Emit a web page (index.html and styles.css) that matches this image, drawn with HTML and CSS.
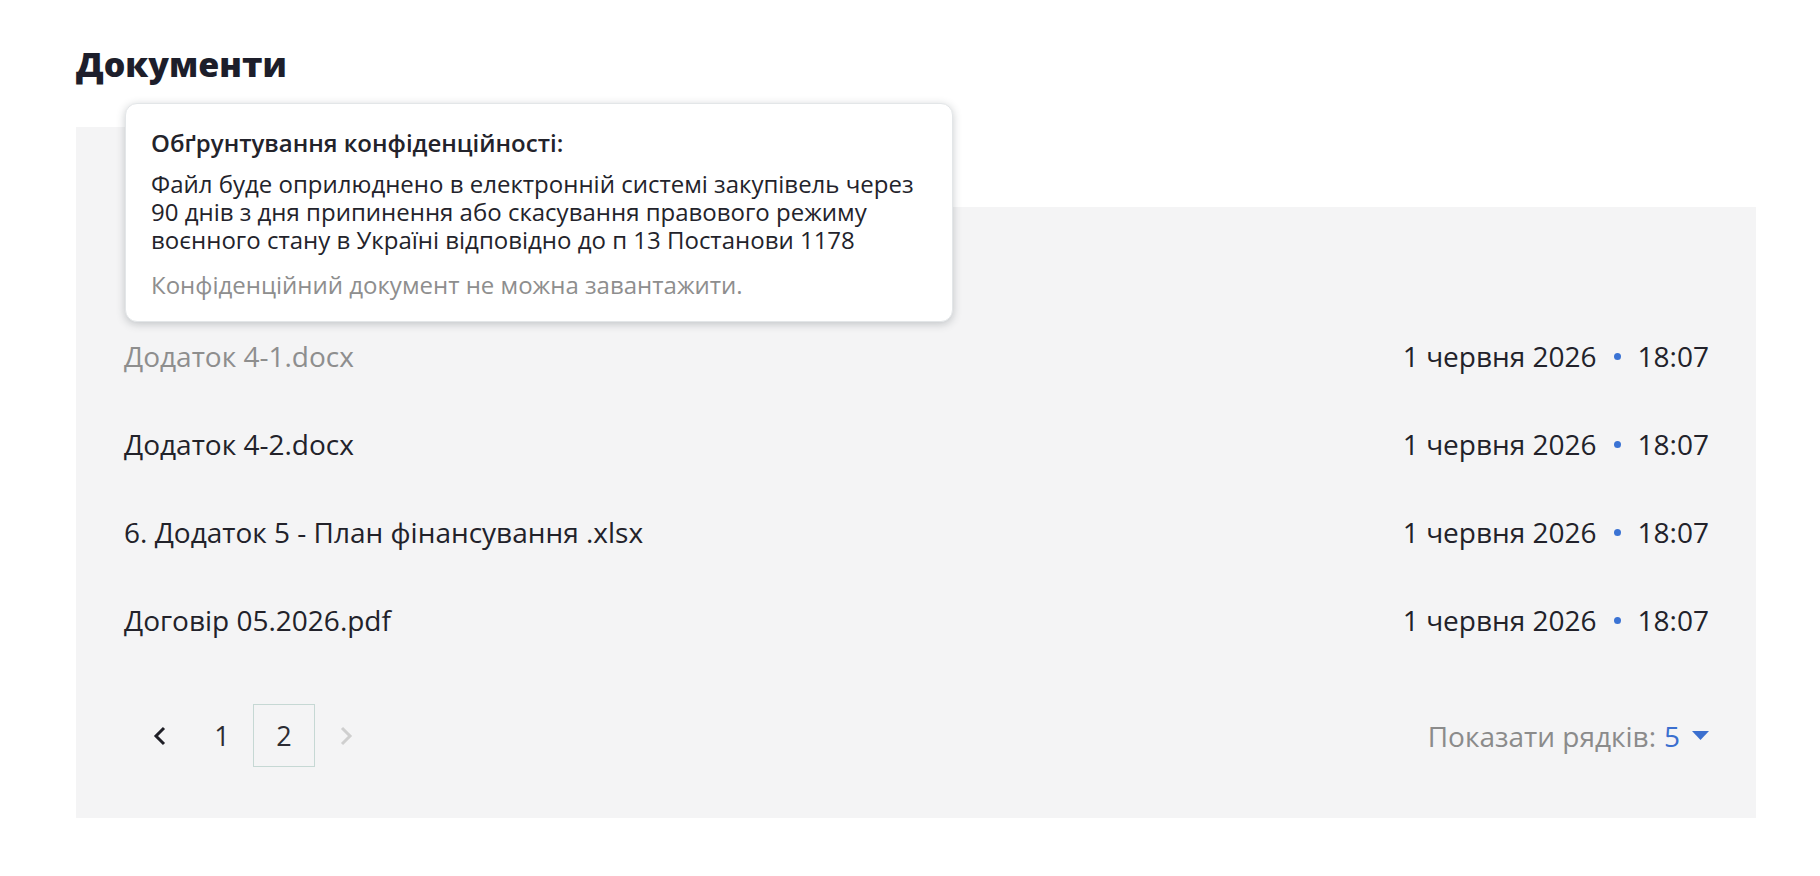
FILE: index.html
```html
<!DOCTYPE html>
<html lang="uk">
<head>
<meta charset="utf-8">
<title>Документи</title>
<link rel="stylesheet" href="styles.css">
</head>
<body>
<main class="page">
  <h1 class="title">Документи</h1>
  <section class="docs">
    <div class="docs-top"><div class="docs-top-fill"></div></div>
    <div class="docs-body">
      <ul class="doc-list">
        <li class="doc-row"><span class="doc-name doc-name--locked">Додаток 4-1.docx</span><span class="doc-date">1 червня 2026<i class="dot"></i>18:07</span></li>
        <li class="doc-row"><span class="doc-name">Додаток 4-2.docx</span><span class="doc-date">1 червня 2026<i class="dot"></i>18:07</span></li>
        <li class="doc-row"><span class="doc-name">6. Додаток 5 - План фінансування .xlsx</span><span class="doc-date">1 червня 2026<i class="dot"></i>18:07</span></li>
        <li class="doc-row"><span class="doc-name">Договір 05.2026.pdf</span><span class="doc-date">1 червня 2026<i class="dot"></i>18:07</span></li>
      </ul>
      <div class="pager-row">
        <nav class="pager">
          <span class="pg pg-prev"><svg width="14" height="20" viewBox="0 0 14 20"><path d="M11 2 L3 10 L11 18" fill="none" stroke="currentColor" stroke-width="3"/></svg></span>
          <span class="pg">1</span>
          <span class="pg pg-current">2</span>
          <span class="pg pg-next"><svg width="14" height="20" viewBox="0 0 14 20"><path d="M3 2 L11 10 L3 18" fill="none" stroke="currentColor" stroke-width="3"/></svg></span>
        </nav>
        <div class="rows">Показати рядків: <span class="rows-val">5</span><svg class="caret" width="17" height="9" viewBox="0 0 17 9"><path d="M0 0 H17 L8.5 9 Z" fill="currentColor"/></svg></div>
      </div>
    </div>
    <div class="tooltip">
      <div class="tt-title">Обґрунтування конфіденційності:</div>
      <p class="tt-text">Файл буде оприлюднено в електронній системі закупівель через 90 днів з дня припинення або скасування правового режиму воєнного стану в Україні відповідно до п 13 Постанови 1178</p>
      <p class="tt-note">Конфіденційний документ не можна завантажити.</p>
    </div>
  </section>
</main>
</body>
</html>
```

FILE: styles.css
```css
* { box-sizing: border-box; }
html, body { margin: 0; background: #ffffff; }
body {
  font-family: "Open Sans", "Noto Sans", sans-serif;
  color: #23232b;
}
.page {
  width: 1820px;
  padding: 44px 64px 0 76px;
}
.title {
  margin: 0 0 43px;
  font-size: 34px;
  line-height: 40px;
  font-weight: 800;
  color: #1d1e2b;
}
.docs {
  position: relative;
  width: 1680px;
}
.docs-top {
  height: 80px;
  display: flex;
}
.docs-top-fill {
  width: 860px;
  background: #f4f4f5;
}
.docs-body {
  background: #f4f4f5;
  padding: 105px 47px 51px 48px;
}
.doc-list {
  list-style: none;
  margin: 0;
  padding: 0;
}
.doc-row {
  height: 88px;
  display: flex;
  align-items: center;
  justify-content: space-between;
  font-size: 28px;
}
.doc-name { color: #22222a; }
.doc-name--locked { color: #8e8e8e; }
.doc-date {
  display: flex;
  align-items: center;
  color: #22222a;
}
.dot {
  width: 7px;
  height: 7px;
  border-radius: 50%;
  background: #3b73d4;
  margin: 0 17px;
}
.pager-row {
  margin-top: 40px;
  height: 63px;
  display: flex;
  align-items: center;
  justify-content: space-between;
}
.pager {
  display: flex;
  margin-left: 5px;
}
.pg {
  width: 62px;
  height: 63px;
  display: flex;
  align-items: center;
  justify-content: center;
  font-size: 27px;
  color: #2c2c33;
}
.pg-prev { color: #1f1f26; }
.pg-next { color: #cfcfcf; }
.pg-current {
  border: 1px solid #c6d8d4;
}
.rows {
  display: flex;
  align-items: center;
  font-size: 28px;
  color: #8b8b8b;
}
.rows-val {
  color: #3b6fcf;
  margin-left: 8px;
}
.caret {
  color: #3b6fcf;
  margin-left: 12px;
}
.tooltip {
  position: absolute;
  left: 49px;
  top: -24px;
  width: 828px;
  height: 219px;
  background: #ffffff;
  border-radius: 12px;
  border: 1px solid #e3e6e8;
  box-shadow: 0 2px 9px rgba(40, 50, 60, 0.25);
  padding: 25px 25px 0 25px;
}
.tt-title {
  font-size: 24px;
  line-height: 28px;
  font-weight: 600;
  color: #23232b;
}
.tt-text {
  margin: 13px 0 0;
  font-size: 24px;
  line-height: 28px;
  color: #23232b;
}
.tt-note {
  margin: 17px 0 0;
  font-size: 24px;
  line-height: 28px;
  color: #8e8e8e;
}
```
